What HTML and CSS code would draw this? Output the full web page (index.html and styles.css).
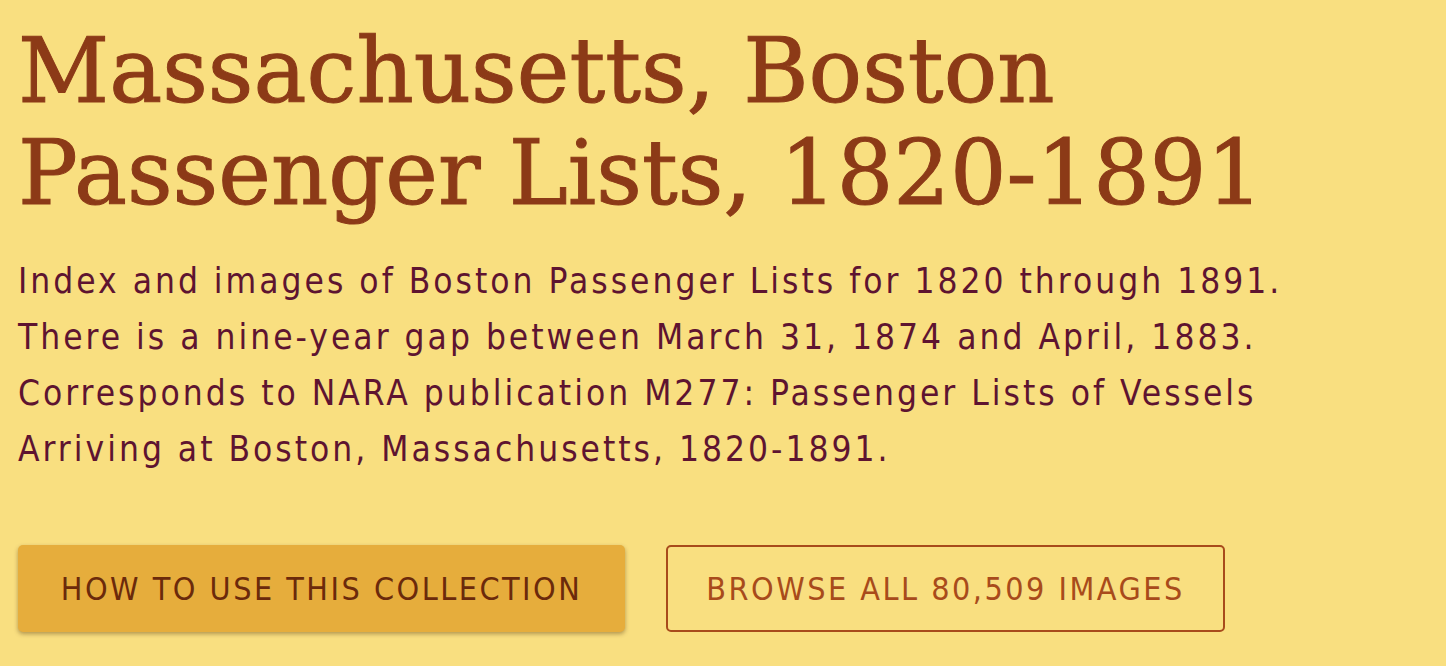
FILE: index.html
```html
<!DOCTYPE html>
<html lang="en">
<head>
    <meta charset="UTF-8">
    <meta name="viewport" content="width=device-width, initial-scale=1.0">
    <title>Massachusetts, Boston Passenger Lists, 1820-1891</title>
    <link rel="stylesheet" href="styles.css">
</head>
<body>
    <div class="collection-header">
        <h1 class="collection-title">Massachusetts, Boston Passenger Lists, 1820-1891</h1>
        <p class="collection-desc">Index and images of Boston Passenger Lists for 1820 through 1891. There is a nine-year gap between March 31, 1874 and April, 1883. Corresponds to NARA publication M277: Passenger Lists of Vessels Arriving at Boston, Massachusetts, 1820-1891.</p>
        <div class="collection-actions">
            <a class="btn btn-primary" href="#">How to use this collection</a>
            <a class="btn btn-outline" href="#">Browse all 80,509 images</a>
        </div>
    </div>
</body>
</html>
```

FILE: styles.css
```css
body {
    margin: 0;
    background-color: #f9df80;
    font-family: 'DejaVu Sans Condensed', 'DejaVu Sans', Tahoma, sans-serif;
}

.collection-header {
    padding: 20px 18px;
}

.collection-title {
    font-family: 'DejaVu Serif', Georgia, serif;
    font-weight: normal;
    color: #8c3a17;
    -webkit-text-stroke: 1px #8c3a17; /* heavier slab look */
    font-size: 89px;
    line-height: 102px;
    margin: 0;
    max-width: 1280px;
}

.collection-desc {
    color: #5e1430;
    font-size: 35px;
    letter-spacing: 3px;
    line-height: 56px;
    margin: 29px 0 0 0;
    max-width: 1310px;
}

.collection-actions {
    display: flex;
    gap: 41px;
    margin-top: 68px;
}

.btn {
    display: flex;
    align-items: center;
    justify-content: center;
    height: 87px;
    box-sizing: border-box;
    border-radius: 5px;
    text-transform: uppercase;
    text-decoration: none;
    font-size: 32px;
    letter-spacing: 2.5px;
}

.btn-primary {
    width: 607px;
    background-color: #e6ad3c;
    color: #6b2a0b;
    box-shadow: 0 2px 4px rgba(90, 60, 20, 0.45);
}

.btn-outline {
    width: 559px;
    border: 2px solid #a84b1b;
    color: #a84b1b;
}
```
